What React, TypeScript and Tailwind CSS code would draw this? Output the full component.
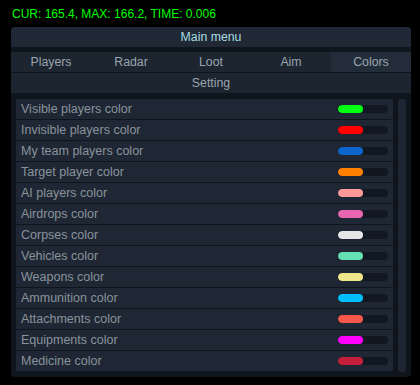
const tabs = ['Players', 'Radar', 'Loot', 'Aim', 'Colors'];

const colors = [
  { label: 'Visible players color', color: '#00ff12' },
  { label: 'Invisible players color', color: '#ff0000' },
  { label: 'My team players color', color: '#0a66cc' },
  { label: 'Target player color', color: '#ff8000' },
  { label: 'AI players color', color: '#ff9999' },
  { label: 'Airdrops color', color: '#e866b0' },
  { label: 'Corpses color', color: '#e6e6e6' },
  { label: 'Vehicles color', color: '#66e0b3' },
  { label: 'Weapons color', color: '#f0e68c' },
  { label: 'Ammunition color', color: '#00bfff' },
  { label: 'Attachments color', color: '#f5574a' },
  { label: 'Equipments color', color: '#ff00ff' },
  { label: 'Medicine color', color: '#c41e3a' },
];

export default function App() {
  return (
    <div className="w-[420px] h-[385px] bg-black font-['Liberation_Sans',Arial,sans-serif] text-[12px] overflow-hidden">
      {/* stats line */}
      <div className="pl-[12px] pt-[7px] h-[27px] leading-[14px] text-[#00ff00]">
        CUR: 165.4, MAX: 166.2, TIME: 0.006
      </div>

      <div className="ml-[11px] w-[400px] h-[350px] bg-[#0f151c] rounded-[4px] flex flex-col">
        <div className="h-[20px] bg-[#1f2834] rounded-t-[4px] flex items-center justify-center text-[12.3px] text-[#a9dde2]">
          Main menu
        </div>

        <div className="mt-[5px] h-[20px] grid grid-cols-5 bg-[#1c2530] text-[12.3px]">
          {tabs.map((tab) => (
            <div
              key={tab}
              className={`flex items-center justify-center text-[#9aa4ae] ${tab === 'Colors' ? 'bg-[#232d39]' : ''}`}
            >
              {tab}
            </div>
          ))}
        </div>
        <div className="mt-[1px] h-[20px] bg-[#1c2530] flex items-center justify-center text-[12.3px] text-[#9aa4ae]">
          Setting
        </div>

        <div className="mt-[6px] px-[5px] flex gap-[5px]">
          <div className="flex-1 flex flex-col gap-[1px]">
            {colors.map((c) => (
              <div key={c.label} className="h-[20px] bg-[#1e2733] flex items-center justify-between pl-[5px] pr-[5px]">
                <span className="text-[12.5px] text-[#8a939c]">{c.label}</span>
                <div className="w-[50px] h-[8px] rounded-full bg-[#111822] overflow-hidden">
                  <div className="h-full w-[25px] rounded-full" style={{ backgroundColor: c.color }} />
                </div>
              </div>
            ))}
          </div>
          <div className="w-[8px] h-[273px] rounded-[3px] bg-[#1d2632]" />
        </div>
      </div>
    </div>
  );
}
